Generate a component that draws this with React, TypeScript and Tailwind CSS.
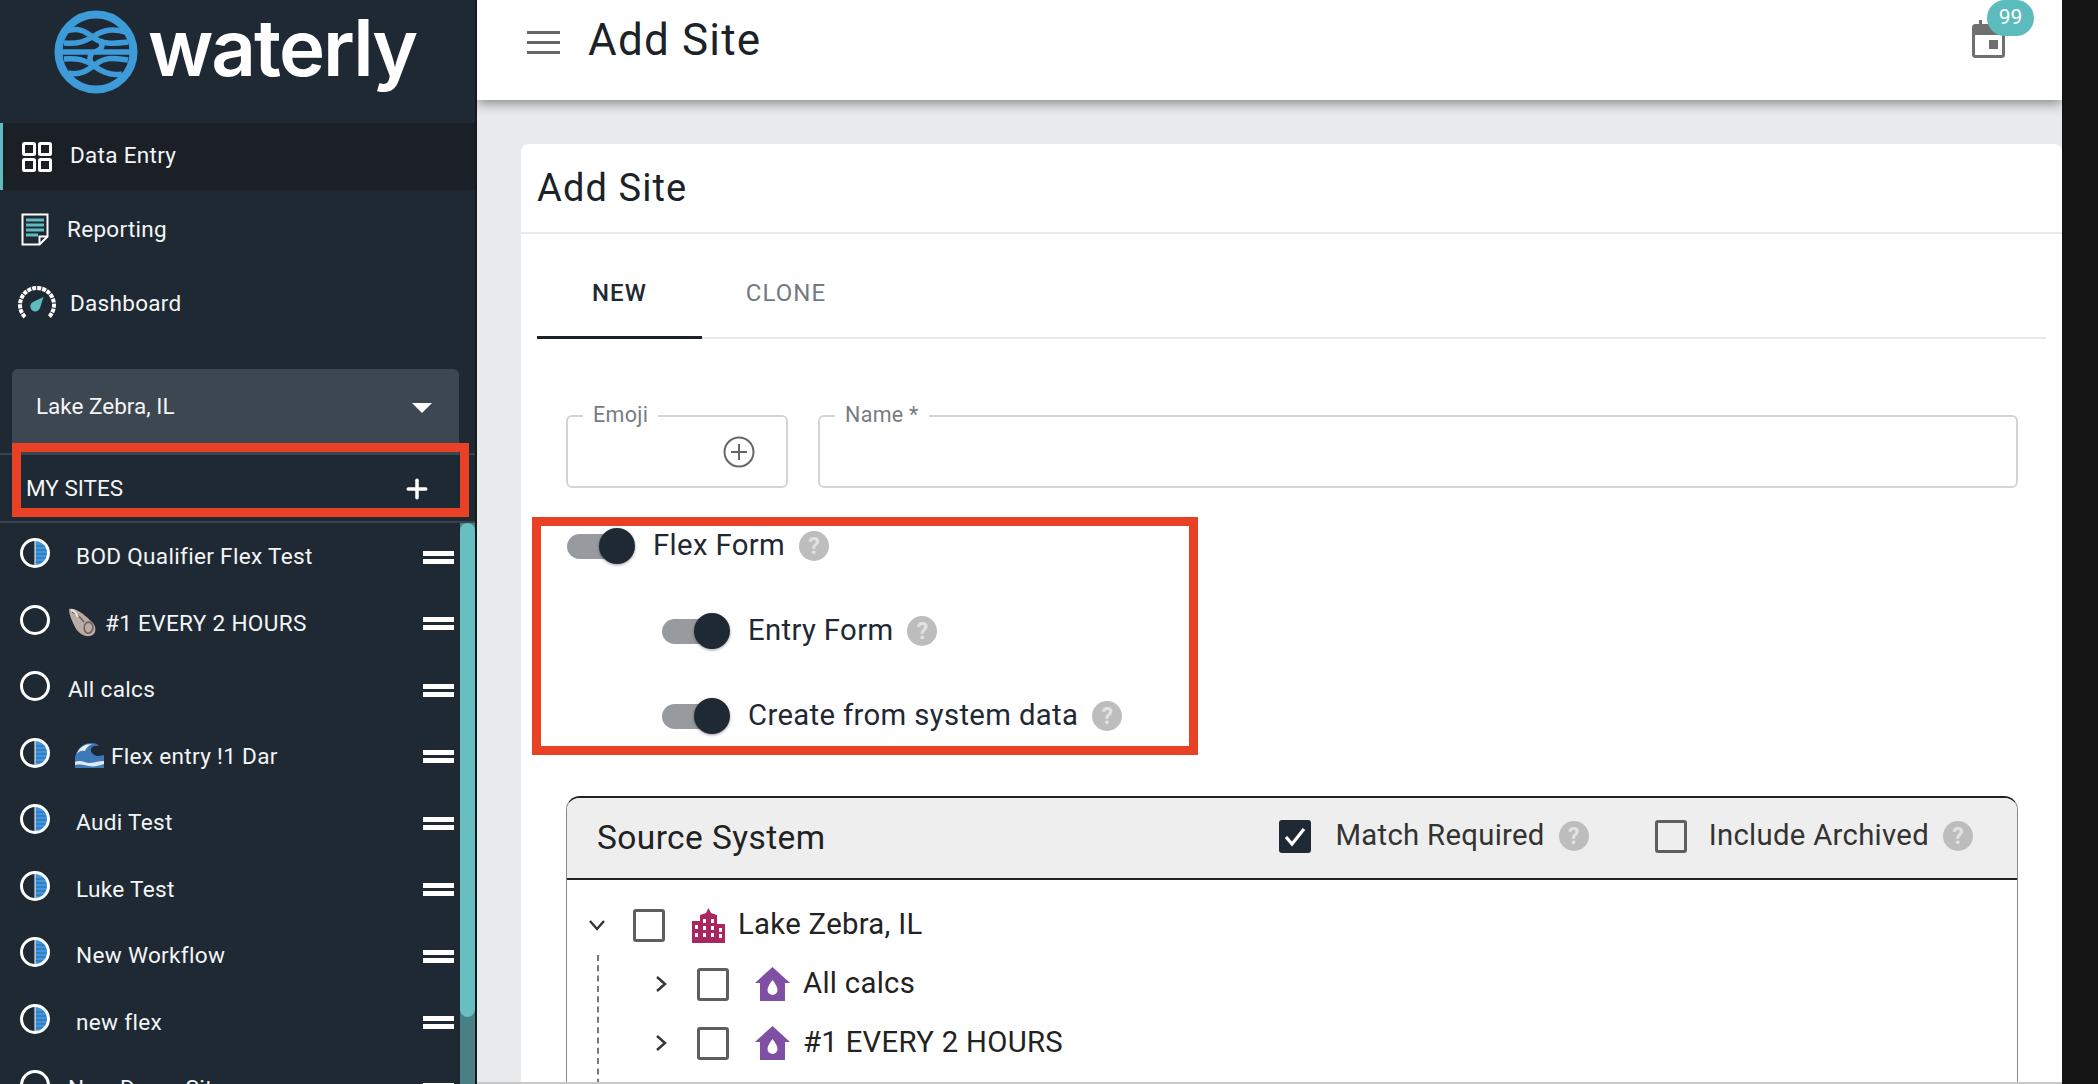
import { Plus } from "lucide-react";
import type { ReactNode } from "react";

const sites = [
  { name: "BOD Qualifier Flex Test", half: true, left: "ml-[25px]" },
  { name: "#1 EVERY 2 HOURS", half: false, emoji: "shell", left: "ml-[17px]" },
  { name: "All calcs", half: false, left: "ml-[17px]" },
  { name: "Flex entry !1 Dar", half: true, emoji: "wave", left: "ml-[24px]" },
  { name: "Audi Test", half: true, left: "ml-[25px]" },
  { name: "Luke Test", half: true, left: "ml-[25px]" },
  { name: "New Workflow", half: true, left: "ml-[25px]" },
  { name: "new flex", half: true, left: "ml-[25px]" },
  { name: "New Dams Site", half: false, left: "ml-[17px]" },
];

function Logo() {
  return (
    <svg width="84" height="86" viewBox="0 0 84 86" fill="none" stroke="#3d9bd9" className="shrink-0">
      <circle cx="42" cy="43" r="37.5" strokeWidth="8" />
      <g strokeWidth="5.5">
        <path d="M10 23C25 17 32 23 40 29s18 6 34 4" />
        <path d="M10 34C24 35 30 33 40 27s18-8 32-4" />
        <path d="M8 43h68" />
        <path d="M10 50C24 49 32 51 40 57s18 10 28 8" />
        <path d="M14 64C26 67 34 61 42 55s16-7 32-4" />
        <path d="M46 31c4 6 2 9-5 12M38 44c-4 5-2 9 2 13" />
      </g>
    </svg>
  );
}

function SiteIcon({ half }: { half: boolean }) {
  return (
    <svg width="32" height="32" viewBox="0 0 32 32" className="shrink-0 -mt-[6px]">
      {half && <path d="M16 3a13 13 0 0 1 0 26z" fill="#3f97e3" />}
      {half && (
        <path d="M16 9h11M16 13h13M16 17h13M16 21h11M16 25h8" stroke="#1f2933" strokeWidth="0.8" opacity="0.55" />
      )}
      {half && <path d="M16 3v26" stroke="#fff" strokeWidth="1" />}
      <circle cx="16" cy="16" r="13.5" fill="none" stroke="#fff" strokeWidth="3" />
    </svg>
  );
}

function Shell() {
  return (
    <svg width="29" height="30" viewBox="0 0 29 30" className="shrink-0 mr-[8px] -mt-[3px]">
      <path d="M1 2c7-2 16 6 24 14 4 5 3 12-3 13-6 1-12-3-15-9C4 14 1 8 1 2z" fill="#b9aca6" />
      <path d="M4 5c5 1 9 6 12 10M18 16c3-2 7 0 7 4s-3 7-6 6-4-7-1-10z" stroke="#6f6059" strokeWidth="1.6" fill="none" />
      <path d="M3 3c3 0 5 3 7 7" stroke="#efe9e5" strokeWidth="2" fill="none" />
    </svg>
  );
}

function Wave() {
  return (
    <svg width="29" height="26" viewBox="0 0 29 26" className="shrink-0 mr-[7px] -mt-[2px]">
      <path d="M0 25V14C2 6 8 0 16 0c4 0 7 1 8 3-4-1-7 0-8 3-1 3 3 7 7 7 3 0 5-1 6-1v13z" fill="#3f78b8" />
      <path d="M2 11C4 4 10 1 17 1c-4 2-6 4-7 7-4-1-6 0-8 3z" fill="#e6eff6" />
      <path d="M0 19c6-3 10 1 14 1s10-2 15-2v3c-6 2-10 3-15 2s-9-2-14-1z" fill="#dfeaf2" />
    </svg>
  );
}

function Handle() {
  return (
    <div className="ml-auto mt-[2px] flex w-[31px] flex-col gap-[3px]">
      <div className="h-[5px] bg-white" />
      <div className="h-[5px] bg-white" />
    </div>
  );
}

function Sidebar() {
  return (
    <aside className="relative flex h-full w-[477px] shrink-0 flex-col overflow-hidden border-r-2 border-[#16191d] bg-[#1f2933] text-[#f3f5f6]">
      <div className="flex h-[123px] shrink-0 items-start pl-[54px] pt-[9px]">
        <Logo />
        <span className="ml-[10px] -mt-[11px] text-[78px] leading-[100px] font-semibold tracking-[-2px] text-white [font-family:Inter,sans-serif]">
          waterly
        </span>
      </div>

      <nav className="shrink-0 text-[22.5px] leading-none tracking-[0.3px]">
        <div className="flex h-[67px] items-center border-l-[3px] border-[#5fbcbd] bg-[#1a2026] pl-[19px]">
          <svg width="30" height="30" viewBox="0 0 30 30" fill="none" stroke="#fff" strokeWidth="3" className="shrink-0">
            <rect x="1.5" y="1.5" width="11" height="11" rx="1" />
            <rect x="17.5" y="1.5" width="11" height="11" rx="1" />
            <rect x="1.5" y="17.5" width="11" height="11" rx="1" />
            <rect x="17.5" y="17.5" width="11" height="11" rx="1" />
          </svg>
          <span className="ml-[18px] -mt-[3px]">Data Entry</span>
        </div>
        <div className="flex h-[74px] items-center pl-[21px] pt-[4px]">
          <svg width="28" height="33" viewBox="0 0 28 33" fill="none" className="shrink-0">
            <path d="M1.5 1.5h25v22l-8 8h-17z" stroke="#fff" strokeWidth="2" />
            <path d="M18.5 31.5v-8h8" stroke="#fff" strokeWidth="2" />
            <path d="M5 7h18M5 12h18M5 17h18M5 22h12" stroke="#5fbcbd" strokeWidth="3" />
          </svg>
          <span className="ml-[18px]">Reporting</span>
        </div>
        <div className="flex h-[74px] items-center pl-[18px] pt-[4px]">
          <svg width="38" height="34" viewBox="0 0 38 34" fill="none" className="shrink-0">
            <path d="M7 31a17 17 0 1 1 24 0" stroke="#fff" strokeWidth="4" strokeDasharray="4 1" />
            <path d="M25.5 11L22 22a5 5 0 1 1-7-6z" fill="#5fbcbd" />
          </svg>
          <span className="ml-[14px]">Dashboard</span>
        </div>
      </nav>

      <div className="mt-[31px] ml-[12px] flex h-[84px] w-[447px] shrink-0 items-start rounded-t-[6px] bg-[#3d4751] pl-[24px] pr-[27px] pt-[25px] text-[22.5px] leading-[24px]">
        <span>Lake Zebra, IL</span>
        <span className="mt-[9px] ml-auto h-0 w-0 border-x-[10px] border-t-[10px] border-x-transparent border-t-white" />
      </div>
      <div className="flex h-[70px] shrink-0 items-center border-y-2 border-[#3a444e] pl-[26px] pr-[43px] pt-[1px] text-[22.5px]">
        <span>MY SITES</span>
        <Plus size={30} strokeWidth={2.8} className="ml-auto text-white" />
      </div>

      <div className="relative flex-1 text-[22.6px] tracking-[0.3px]">
        {sites.map((site) => (
          <div key={site.name} className="flex h-[66.5px] items-center pl-[19px] pr-[21px]">
            <SiteIcon half={site.half} />
            <div className={`${site.left} mt-[2px] flex items-center whitespace-nowrap`}>
              {site.emoji === "shell" && <Shell />}
              {site.emoji === "wave" && <Wave />}
              <span>{site.name}</span>
            </div>
            <Handle />
          </div>
        ))}
        <div className="absolute inset-y-0 right-0 w-[15px] bg-[#4a8085]">
          <div className="h-[494px] rounded-full bg-[#67bfc0]" />
        </div>
      </div>

      <div className="absolute left-[12px] top-[443px] h-[74px] w-[457px] border-[9px] border-[#e84125]" />
    </aside>
  );
}

function Help() {
  return (
    <span className="ml-[14px] flex h-[30px] w-[30px] shrink-0 items-center justify-center rounded-full bg-[#bdbdbd] text-[23px] font-bold leading-none text-[#e2e2e2]">
      ?
    </span>
  );
}

function Toggle() {
  return (
    <span className="relative inline-block h-[25px] w-[62px] shrink-0 rounded-full bg-[#979ba0]">
      <span className="absolute -top-[6px] left-[32px] h-[36px] w-[36px] rounded-full bg-[#1f2933] shadow-[0_1px_3px_rgba(0,0,0,0.4)]" />
    </span>
  );
}

function ToggleRow({ label, nested }: { label: string; nested?: boolean }) {
  return (
    <div className={`flex h-[36px] items-center ${nested ? "ml-[95px]" : ""}`}>
      <Toggle />
      <span className="ml-[24px] text-[29.3px] leading-none tracking-[0.35px] text-[#1f2933]">{label}</span>
      <Help />
    </div>
  );
}

function Box({ checked, className = "" }: { checked?: boolean; className?: string }) {
  if (checked) {
    return (
      <span className={`flex h-[33px] w-[32px] shrink-0 items-center justify-center rounded-[3px] bg-[#1f2933] ${className}`}>
        <svg width="24" height="24" viewBox="0 0 24 24" fill="none" stroke="#fff" strokeWidth="3.2">
          <path d="M3 13l6 7L21 5" />
        </svg>
      </span>
    );
  }
  return <span className={`block h-[33px] w-[32px] shrink-0 rounded-[3px] border-[3px] border-[#5e5e5e] ${className}`} />;
}

function Chevron({ down }: { down?: boolean }) {
  return (
    <svg width="20" height="20" viewBox="0 0 20 20" fill="none" stroke="#333" strokeWidth="2.4" className="shrink-0">
      <path d={down ? "M3 6l7 8 7-8" : "M6 3l8 7-8 7"} />
    </svg>
  );
}

function Building() {
  return (
    <svg width="33" height="35" viewBox="0 0 33 35" className="shrink-0">
      <path
        fillRule="evenodd"
        fill="#a9265f"
        d="M0 35V13h8V7l6-2 2.500-5 2.500 5 6 2v9h8v19zM3 17v4h3v-4zm0 8v4h3v-4zM11 11v4h3v-4zm0 7v4h3v-4zm0 7v4h3v-4zM19 11v4h3v-4zm0 7v4h3v-4zm0 7v4h3v-4zM27 20v4h3v-4zm0 6v4h3v-4z"
      />
    </svg>
  );
}

function House() {
  return (
    <svg width="35" height="34" viewBox="0 0 35 34" className="shrink-0">
      <path
        fillRule="evenodd"
        fill="#7f4fa3"
        d="M17.5 0L35 16h-5v18H5V16H0zM17.5 13c-3 4-5 7-5 10a5 5 0 0 0 10 0c0-3-2-6-5-10z"
      />
    </svg>
  );
}

function Field({ label, className }: { label: string; className: string }) {
  return (
    <div className={`relative h-[73px] rounded-[6px] border-2 border-[#d2d4d6] ${className}`}>
      <span className="absolute -top-[14px] left-[15px] bg-white px-[10px] text-[21.5px] leading-[24px] tracking-[0.3px] text-[#777c80]">
        {label}
      </span>
      {label === "Emoji" && (
        <svg width="32" height="32" viewBox="0 0 32 32" fill="none" stroke="#666" strokeWidth="2" className="absolute right-[31px] top-[19px]">
          <circle cx="16" cy="16" r="14.5" />
          <path d="M16 8v16M8 16h16" />
        </svg>
      )}
    </div>
  );
}

function TreeRow({ label, icon, child }: { label: string; icon: ReactNode; child?: boolean }) {
  return (
    <div className={`flex h-[34px] items-center ${child ? "ml-[64px]" : ""}`}>
      <Chevron down={!child} />
      <Box className="ml-[26px]" />
      <span className={child ? "ml-[26px]" : "ml-[27px]"}>{icon}</span>
      <span className="ml-[13px] text-[29.3px] leading-none tracking-[0.3px] text-[#222]">{label}</span>
    </div>
  );
}

export default function App() {
  return (
    <div className="flex h-[1084px] w-[2098px] overflow-hidden bg-[#141414] [font-family:Roboto,sans-serif]">
      <Sidebar />
      <main className="relative flex h-full w-[1585px] shrink-0 flex-col overflow-hidden border-b-2 border-[#c9c9c9] bg-[#e8eaec]">
        <header className="z-10 flex h-[100px] shrink-0 items-start bg-white pl-[50px] pt-[11px] shadow-[0_3px_12px_rgba(0,0,0,0.45)]">
          <div className="mt-[20px] flex w-[33px] flex-col gap-[7px]">
            <div className="h-[3px] bg-[#666]" />
            <div className="h-[3px] bg-[#666]" />
            <div className="h-[3px] bg-[#666]" />
          </div>
          <h1 className="ml-[28px] text-[44px] leading-[58px] tracking-[1.2px] text-[#1b2228]">Add Site</h1>
          <div className="relative ml-auto mr-[57px] mt-[9px]">
            <svg width="33" height="38" viewBox="0 0 33 38" fill="none">
              <rect x="1.5" y="5.5" width="30" height="31" rx="2" stroke="#707070" strokeWidth="3" />
              <path d="M1 6h31v9H1z" fill="#707070" />
              <path d="M7 0h3v6H7zM23 0h3v6h-3z" fill="#707070" />
              <rect x="17" y="20" width="9" height="9" fill="#707070" />
            </svg>
            <span className="absolute -right-[29px] -top-[20px] flex h-[36px] w-[47px] items-center justify-center rounded-full bg-[#5cbcbd] text-[21px] text-white">
              99
            </span>
          </div>
        </header>

        <section className="ml-[44px] mt-[44px] flex-1 rounded-t-[8px] bg-white">
          <div className="flex h-[90px] items-center border-b-2 border-[#e8eaec] pl-[16px]">
            <h2 className="text-[38px] leading-none tracking-[1.1px] text-[#1b2228]">Add Site</h2>
          </div>

          <div className="mx-[16px] flex h-[105px] items-end border-b-2 border-[#e8eaec] text-[24px] tracking-[1.1px]">
            <div className="-mb-[2px] flex h-[70px] w-[165px] items-center justify-center border-b-[3px] border-[#1b2228] pb-[19px] font-medium text-[#1f2933]">
              NEW
            </div>
            <div className="flex h-[70px] w-[168px] items-center justify-center pb-[19px] text-[#757a7f]">CLONE</div>
          </div>

          <div className="ml-[45px] mr-[44px] mt-[76px] flex gap-[30px]">
            <Field label="Emoji" className="w-[222px]" />
            <Field label="Name *" className="flex-1" />
          </div>

          <div className="ml-[46px] mt-[40px] flex flex-col gap-[49px]">
            <ToggleRow label="Flex Form" />
            <ToggleRow label="Entry Form" nested />
            <ToggleRow label="Create from system data" nested />
          </div>

          <div className="ml-[45px] mr-[44px] mt-[62px] h-[300px] rounded-t-[14px] border-x border-t-2 border-x-[#8a8a8a] border-t-[#222]">
            <div className="flex h-[82px] items-center rounded-t-[12px] border-b-2 border-[#222] bg-[#eeeeee] pl-[30px] pr-[44px]">
              <span className="text-[33.5px] leading-none tracking-[0.4px] text-[#222]">Source System</span>
              <div className="ml-auto -mt-[4px] flex items-center">
                <Box checked />
                <span className="ml-[24px] text-[29.3px] leading-none tracking-[0.3px] text-[#333]">Match Required</span>
                <Help />
                <Box className="ml-[66px]" />
                <span className="ml-[22px] text-[29.3px] leading-none tracking-[0.3px] text-[#333]">Include Archived</span>
                <Help />
              </div>
            </div>
            <div className="relative flex flex-col gap-[25px] pl-[20px] pt-[28px]">
              <TreeRow label="Lake Zebra, IL" icon={<Building />} />
              <TreeRow label="All calcs" icon={<House />} child />
              <TreeRow label="#1 EVERY 2 HOURS" icon={<House />} child />
              <div className="absolute left-[30px] top-[75px] h-[140px] border-l-2 border-dashed border-[#777]" />
            </div>
          </div>
        </section>

        <div className="absolute left-[55px] top-[517px] h-[238px] w-[666px] border-[9px] border-[#e84125]" />
      </main>
    </div>
  );
}
